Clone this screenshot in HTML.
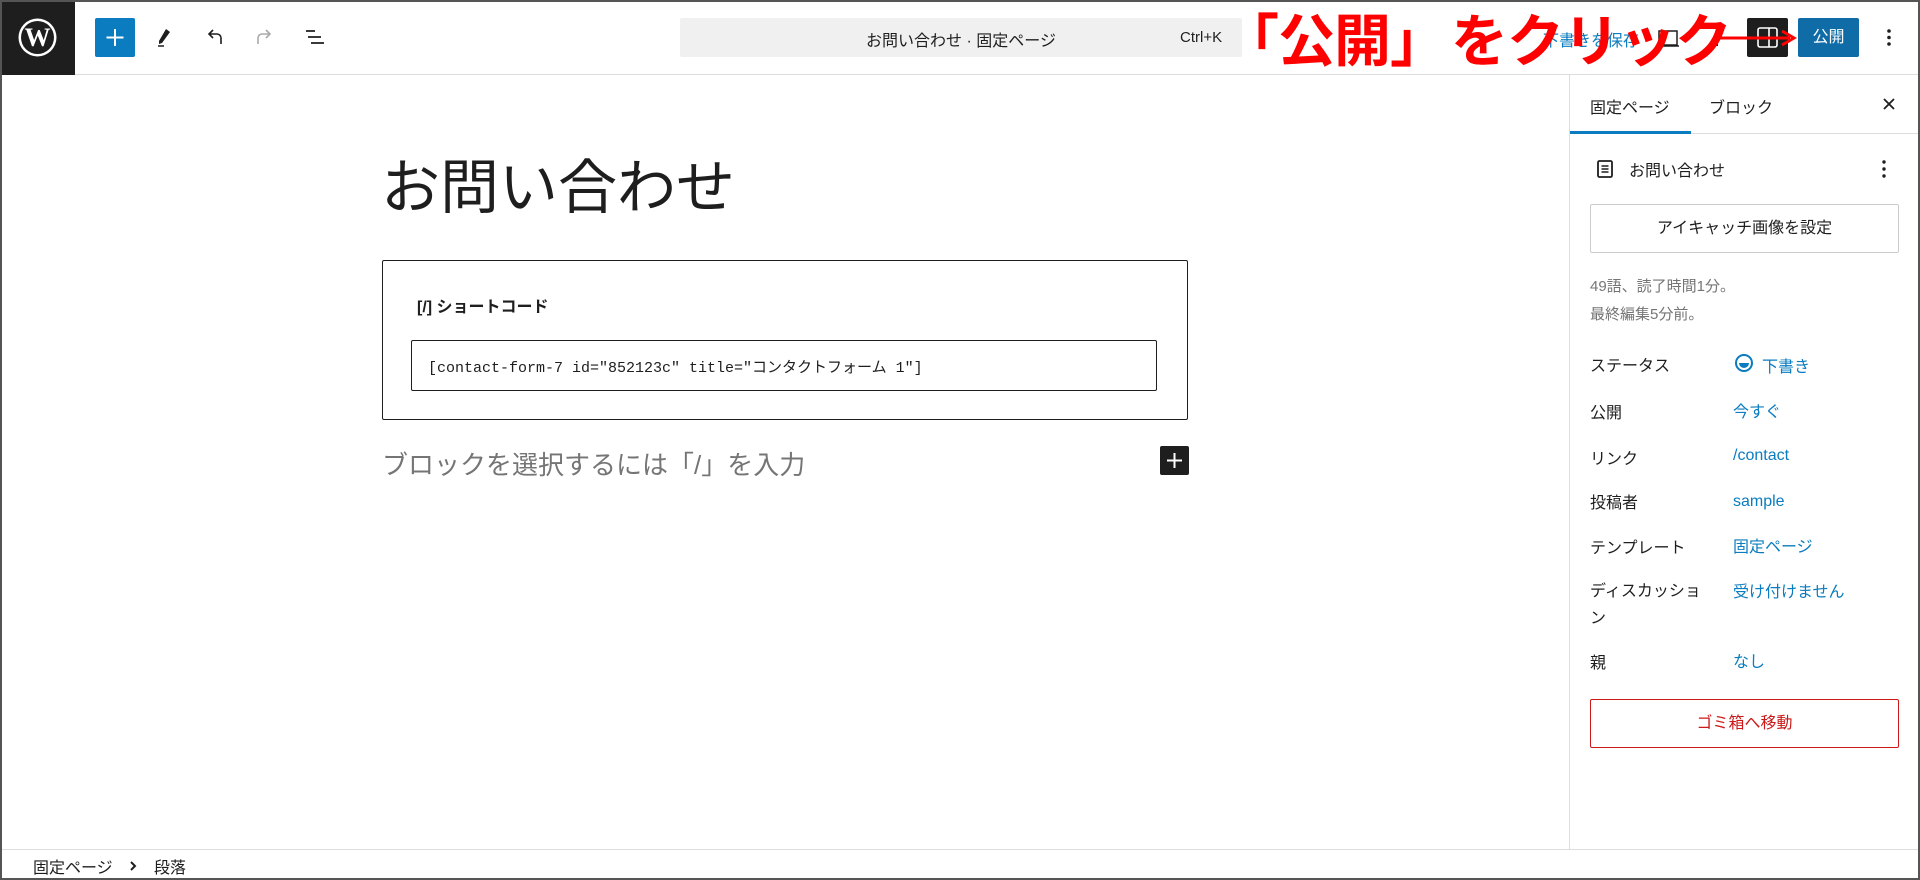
<!DOCTYPE html>
<html><head><meta charset="utf-8"><style>
*{margin:0;padding:0;box-sizing:border-box}
body{width:1920px;height:880px;overflow:hidden;background:#fff;font-family:"Liberation Sans","Noto Sans CJK JP",sans-serif;color:#1e1e1e;position:relative}
.frame{position:absolute;inset:0;border:2px solid #555;pointer-events:none;z-index:50}
.a{position:absolute;white-space:nowrap}
.top{position:absolute;left:0;top:0;width:1920px;height:75px;border-bottom:1px solid #ddd}
.logo{position:absolute;left:0;top:0;width:75px;height:75px;background:#1e1e1e}
.side{position:absolute;left:1569px;top:75px;width:351px;height:774px;border-left:1px solid #ddd}
.lab{position:absolute;left:1590px;font-size:16px;color:#1e1e1e}
.val{position:absolute;left:1733px;font-size:16px;color:#0a7cbf}
</style></head><body>
<div class="frame"></div>
<div class="top"></div>
<div class="logo">
<svg width="75" height="75" viewBox="0 0 75 75"><circle cx="37.5" cy="37.5" r="19" fill="#fff"/><circle cx="37.5" cy="37.5" r="16.5" fill="#1e1e1e"/><text x="37.5" y="46" text-anchor="middle" font-family="Liberation Serif,serif" font-weight="bold" font-size="26" fill="#fff">W</text></svg>
</div>
<div class="a" style="left:95px;top:18px;width:40px;height:39px;background:#0a7cbf;border-radius:2px"></div>
<svg class="a" style="left:95px;top:18px" width="40" height="39"><path d="M20 11v17M11.5 19.5h17" stroke="#fff" stroke-width="2"/></svg>
<svg class="a" style="left:153px;top:25px" width="24" height="24"><path d="M13 4l4 3-8 11-3 1 0-3z" fill="#1e1e1e"/><path d="M5 21h6" stroke="#1e1e1e" stroke-width="1.5"/></svg>
<svg class="a" style="left:203px;top:25px" width="24" height="24"><path d="M18 19v-6a4 4 0 0 0-4-4H6M10 5L6 9l4 4" stroke="#1e1e1e" stroke-width="1.6" fill="none"/></svg>
<svg class="a" style="left:252px;top:25px" width="24" height="24"><path d="M6 19v-6a4 4 0 0 1 4-4h8M14 5l4 4-4 4" stroke="#aaa" stroke-width="1.6" fill="none"/></svg>
<svg class="a" style="left:303px;top:25px" width="24" height="24"><path d="M3 6h9M5 12h13M8 18h13" stroke="#1e1e1e" stroke-width="1.8"/></svg>
<div class="a" style="left:680px;top:18px;width:562px;height:39px;background:#f0f0f0;border-radius:2px"></div>
<div class="a" style="left:680px;top:27px;width:562px;text-align:center;font-size:16px">お問い合わせ · 固定ページ</div>
<div class="a" style="left:1180px;top:29px;font-size:15px;color:#1e1e1e">Ctrl+K</div>
<div class="a" style="left:1543px;top:27px;font-size:16px;color:#0a7cbf">下書きを保存</div>
<svg class="a" style="left:1656px;top:26px" width="24" height="24"><rect x="3" y="5" width="18" height="14" fill="none" stroke="#1e1e1e" stroke-width="1.5"/><path d="M1 20h22" stroke="#1e1e1e" stroke-width="1.5"/></svg>
<div class="a" style="left:1716px;top:28px;width:2px;height:18px;background:#1e1e1e"></div>
<div class="a" style="left:1747px;top:18px;width:41px;height:39px;background:#1e1e1e;border-radius:2px"></div>
<svg class="a" style="left:1755px;top:25px" width="25" height="25"><rect x="3" y="3" width="19" height="19" rx="2" fill="none" stroke="#fff" stroke-width="1.6"/><path d="M14 3v19" stroke="#fff" stroke-width="1.6"/></svg>
<div class="a" style="left:1798px;top:18px;width:61px;height:39px;background:#0f6ca6;border-radius:2px;color:#fff;font-size:16px;text-align:center;line-height:39px">公開</div>
<svg class="a" style="left:1880px;top:25px" width="18" height="25"><circle cx="9" cy="6" r="1.8" fill="#1e1e1e"/><circle cx="9" cy="12.5" r="1.8" fill="#1e1e1e"/><circle cx="9" cy="19" r="1.8" fill="#1e1e1e"/></svg>
<div class="a" style="left:1222px;top:-4px;font-size:57px;font-weight:bold;color:#f00;font-family:'Noto Sans CJK JP',sans-serif;letter-spacing:-1px;z-index:5">「公開」<span style="letter-spacing:-8px"> </span>をクリック</div>
<svg class="a" style="left:1712px;top:28px;z-index:6" width="86" height="20"><path d="M2 10h76" stroke="#f00" stroke-width="3"/><path d="M70 3l12 7-12 7" stroke="#f00" stroke-width="3" fill="none"/></svg>

<div class="a" style="left:381px;top:156px;font-size:59px;line-height:1.1">お問い合わせ</div>
<div class="a" style="left:382px;top:260px;width:806px;height:160px;border:1px solid #1e1e1e;border-radius:2px"></div>
<div class="a" style="left:417px;top:293px;font-size:16px;font-weight:bold">[/] ショートコード</div>
<div class="a" style="left:411px;top:340px;width:746px;height:51px;border:1px solid #1e1e1e;border-radius:2px"></div>
<div class="a" style="left:428px;top:356px;font-size:15px;font-family:'Liberation Mono','Noto Sans CJK JP',monospace">[contact-form-7 id="852123c" title="コンタクトフォーム 1"]</div>
<div class="a" style="left:382px;top:445px;font-size:26px;color:#757575">ブロックを選択するには「/」を入力</div>
<div class="a" style="left:1160px;top:446px;width:29px;height:29px;background:#1e1e1e;border-radius:2px"></div>
<svg class="a" style="left:1160px;top:446px" width="29" height="29"><path d="M14.5 7v15M7 14.5h15" stroke="#fff" stroke-width="2"/></svg>

<div class="side"></div>
<div class="a" style="left:1569px;top:133px;width:351px;height:1px;background:#ddd"></div>
<div class="a" style="left:1570px;top:131px;width:121px;height:3px;background:#0a7cbf"></div>
<div class="a" style="left:1590px;top:94px;font-size:16px">固定ページ</div>
<div class="a" style="left:1709px;top:94px;font-size:16px">ブロック</div>
<svg class="a" style="left:1880px;top:95px" width="18" height="18"><path d="M4 4l10 10M14 4L4 14" stroke="#1e1e1e" stroke-width="1.8"/></svg>
<svg class="a" style="left:1594px;top:158px" width="22" height="22"><rect x="4" y="3" width="14" height="16" rx="1.5" fill="none" stroke="#1e1e1e" stroke-width="1.8"/><path d="M7.5 8h7M7.5 11h7M7.5 14h7" stroke="#1e1e1e" stroke-width="1.6"/></svg>
<div class="a" style="left:1629px;top:157px;font-size:16px">お問い合わせ</div>
<svg class="a" style="left:1876px;top:157px" width="16" height="24"><circle cx="8" cy="5" r="1.7" fill="#1e1e1e"/><circle cx="8" cy="12" r="1.7" fill="#1e1e1e"/><circle cx="8" cy="19" r="1.7" fill="#1e1e1e"/></svg>
<div class="a" style="left:1590px;top:204px;width:309px;height:49px;border:1px solid #ccc;border-radius:2px;text-align:center;line-height:47px;font-size:16px">アイキャッチ画像を設定</div>
<div class="a" style="left:1590px;top:275px;font-size:15px;color:#757575">49語、読了時間1分。</div>
<div class="a" style="left:1590px;top:303px;font-size:15px;color:#757575">最終編集5分前。</div>
<div class="lab" style="top:352px">ステータス</div>
<svg class="a" style="left:1733px;top:352px" width="22" height="22"><circle cx="11" cy="11" r="8" fill="none" stroke="#0a7cbf" stroke-width="2"/><path d="M6 11h10a5 5 0 0 1-10 0z" fill="#0a7cbf"/></svg>
<div class="val" style="left:1762px;top:353px">下書き</div>
<div class="lab" style="top:399px">公開</div><div class="val" style="top:398px">今すぐ</div>
<div class="lab" style="top:445px">リンク</div><div class="val" style="top:447px">/contact</div>
<div class="lab" style="top:489px">投稿者</div><div class="val" style="top:493px">sample</div>
<div class="lab" style="top:534px">テンプレート</div><div class="val" style="top:533px">固定ページ</div>
<div class="lab" style="top:578px;line-height:27px;white-space:normal;width:120px">ディスカッション</div><div class="val" style="top:578px">受け付けません</div>
<div class="lab" style="top:649px">親</div><div class="val" style="top:648px">なし</div>
<div class="a" style="left:1590px;top:699px;width:309px;height:49px;border:1px solid #cc1818;border-radius:2px;text-align:center;line-height:47px;font-size:16px;color:#cc1818">ゴミ箱へ移動</div>

<div class="a" style="left:0;top:849px;width:1920px;height:1px;background:#ddd"></div>
<div class="a" style="left:33px;top:854px;font-size:16px">固定ページ</div>
<svg class="a" style="left:127px;top:858px" width="12" height="16"><path d="M4 4l4 4-4 4" stroke="#1e1e1e" stroke-width="2" fill="none"/></svg>
<div class="a" style="left:154px;top:854px;font-size:16px">段落</div>
</body></html>
